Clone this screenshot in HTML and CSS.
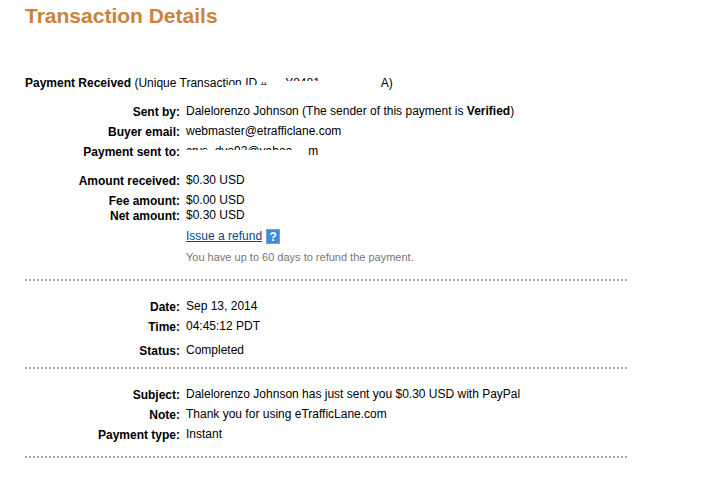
FILE: index.html
```
<!DOCTYPE html>
<html lang="en">
<head>
<meta charset="utf-8">
<title>Transaction Details</title>
<link rel="stylesheet" href="styles.css">
</head>
<body>
<main class="page">
  <h1>Transaction Details</h1>
  <p class="summary"><strong>Payment Received</strong> (Unique Transact<span class="cut cut-low">ion ID&nbsp;</span><span class="cut cut-both">#</span><span class="cut cut-high txn-code">Y8481</span><span class="txn-end">A)</span></p>

  <section class="block">
    <dl>
      <div class="row"><dt>Sent by:</dt><dd>Dalelorenzo Johnson (The sender of this payment is <strong>Verified</strong>)</dd></div>
      <div class="row"><dt>Buyer email:</dt><dd>webmaster@etrafficlane.com</dd></div>
      <div class="row gap-after"><dt>Payment sent to:</dt><dd><span class="cut cut-mid">crys_dyo92@yahoo</span><span class="email-end">m</span></dd></div>
      <div class="row"><dt>Amount received:</dt><dd>$0.30 USD</dd></div>
      <div class="row tight"><dt>Fee amount:</dt><dd>$0.00 USD</dd></div>
      <div class="row"><dt>Net amount:</dt><dd>$0.30 USD</dd></div>
    </dl>
    <div class="refund">
      <a href="#refund">Issue a refund</a>
      <button class="help" type="button" aria-label="Help">?</button>
    </div>
    <p class="hint">You have up to 60 days to refund the payment.</p>
  </section>

  <section class="block">
    <dl>
      <div class="row"><dt>Date:</dt><dd>Sep 13, 2014</dd></div>
      <div class="row status-gap"><dt>Time:</dt><dd>04:45:12 PDT</dd></div>
      <div class="row tight"><dt>Status:</dt><dd>Completed</dd></div>
    </dl>
  </section>

  <section class="block">
    <dl>
      <div class="row"><dt>Subject:</dt><dd>Dalelorenzo Johnson has just sent you $0.30 USD with PayPal</dd></div>
      <div class="row"><dt>Note:</dt><dd>Thank you for using eTrafficLane.com</dd></div>
      <div class="row"><dt>Payment type:</dt><dd>Instant</dd></div>
    </dl>
  </section>
</main>
</body>
</html>
```
FILE: styles.css
```
* {
  box-sizing: border-box;
}

body {
  margin: 0;
  background: #fff;
  color: #000;
  font: 12px/15px "Liberation Sans", Arial, sans-serif;
}

.page {
  max-width: 627px;
  padding: 4px 0 0 25px;
}

h1 {
  margin: 0 0 48px;
  color: #cc8239;
  font-size: 21px;
  line-height: 24px;
}

.summary {
  margin: 0 0 13px;
}

.cut {
  display: inline-block;
  vertical-align: top;
}

.cut-low {
  clip-path: inset(0 0 6px 0);
}

.cut-both {
  clip-path: inset(6px 0 6px 0);
}

.cut-mid {
  clip-path: inset(0 0 9px 0);
}

.cut-high {
  clip-path: inset(0 0 10px 0);
}

.txn-code {
  margin-left: 18px;
}

.txn-end {
  margin-left: 61px;
}

.email-end {
  margin-left: 16px;
}

.block {
  padding-bottom: 11px;
  margin-bottom: 18px;
  background: repeating-linear-gradient(to right, #a8a8a8 0 2px, transparent 2px 4px) left bottom / 100% 2px no-repeat;
}

dl {
  margin: 0;
}

.row {
  display: grid;
  grid-template-columns: 155px 1fr;
  column-gap: 6px;
  padding-bottom: 5px;
}

.row.tight {
  padding-bottom: 0;
}

.row.gap-after {
  padding-bottom: 14px;
}

.row.status-gap {
  padding-bottom: 9px;
}

dt {
  padding-top: 1px;
  margin-bottom: -1px;
  font-weight: bold;
  text-align: right;
}

dd {
  margin: 0;
}

.refund {
  display: flex;
  align-items: center;
  gap: 4px;
  margin: 1px 0 6px 161px;
}

.refund a {
  color: #084482;
}

.help {
  width: 14px;
  height: 15px;
  padding: 0;
  border: 1px solid #6aa5df;
  background: #3f8bd8;
  color: #fff;
  font: bold 12px/12px "Liberation Sans", Arial, sans-serif;
}

.hint {
  margin: 0 0 5px 161px;
  color: #777;
  font-size: 11px;
}
```
